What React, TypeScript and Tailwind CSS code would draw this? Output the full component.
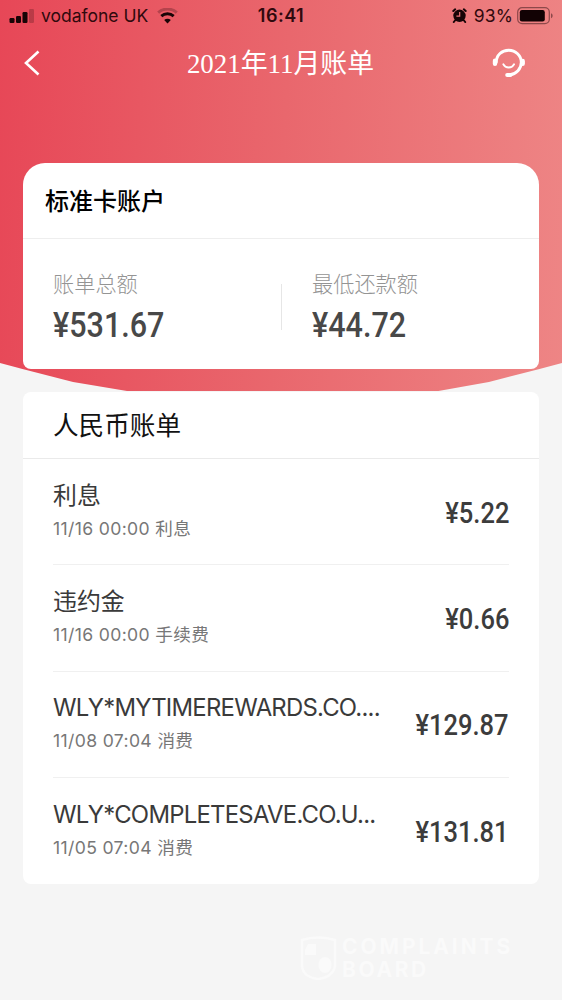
import type { ReactNode } from 'react'

type Entry = {
  title: string
  time: string
  kind: string
  amount: string
}

const ENTRIES: Entry[] = [
  { title: '利息', time: '11/16 00:00', kind: '利息', amount: '5.22' },
  { title: '违约金', time: '11/16 00:00', kind: '手续费', amount: '0.66' },
  { title: 'WLY*MYTIMEREWARDS.CO....', time: '11/08 07:04', kind: '消费', amount: '129.87' },
  { title: 'WLY*COMPLETESAVE.CO.U...', time: '11/05 07:04', kind: '消费', amount: '131.81' },
]

function StatusBar() {
  return (
    <div className="grid h-[31px] grid-cols-[1fr_auto_1fr] items-center pl-[9px] pr-[9px] text-[#30090d]">
      <div className="flex items-center">
        <svg width="26" height="14" viewBox="0 0 26 14">
          <rect x="0.5" y="9" width="5" height="5" rx="1.2" fill="#180406" />
          <rect x="7" y="7" width="5" height="7" rx="1.2" fill="#180406" />
          <rect x="13.5" y="3" width="5" height="11" rx="1.2" fill="#180406" />
          <rect x="20" y="0" width="5" height="14" rx="1.2" fill="#180406" opacity="0.22" />
        </svg>
        <span className="ml-[6px] w-[107px] whitespace-nowrap text-[17.5px] leading-5">vodafone UK</span>
        <svg className="ml-[9px]" width="21" height="16" viewBox="0 0 21 16" fill="none" stroke="#180406">
          <path d="M1.2 4.6C6.5-.1 14.5-.1 19.8 4.6" strokeWidth="3" opacity="0.25" />
          <path d="M4.3 8.1C7.8 5 13.2 5 16.7 8.1" strokeWidth="2.9" />
          <path d="M10.5 15.5L7.2 11.9C9 10.3 12 10.3 13.8 11.9Z" fill="#180406" stroke="none" />
        </svg>
      </div>
      <span className="text-[18px] font-semibold leading-5 tracking-[0.5px]">16:41</span>
      <div className="flex items-center justify-end">
        <svg width="15" height="15" viewBox="0 0 15 15">
          <circle cx="7.5" cy="7.8" r="6.2" fill="#180406" />
          <path d="M1.3 3L3.2 1.3M13.7 3L11.8 1.3M3 12.5L1.8 14M12 12.5L13.2 14" stroke="#180406" strokeWidth="2" strokeLinecap="round" />
          <path d="M7.7 4V8.2H4.4" stroke="#eb7479" strokeWidth="1.2" fill="none" />
        </svg>
        <span className="ml-[7px] text-[17.5px] leading-5 tracking-[0.1px]">93%</span>
        <svg className="ml-[4px]" width="36" height="18" viewBox="0 0 36 18">
          <rect x="0.7" y="0.7" width="31.6" height="16" rx="4.4" fill="none" stroke="#180406" strokeWidth="1.2" opacity="0.45" />
          <rect x="2.8" y="3" width="25" height="11.4" rx="2.2" fill="#120204" />
          <path d="M34 6.2C36.2 7.2 36.2 10.2 34 11.2Z" fill="#180406" opacity="0.45" />
        </svg>
      </div>
    </div>
  )
}

function NavBar() {
  return (
    <div className="flex h-[64px] items-center justify-between pl-[23px] pr-[36px] text-white">
      <svg width="18" height="28" viewBox="0 0 18 28" fill="none" stroke="currentColor" strokeWidth="2.6">
        <path d="M15.5 2.5L3 14L15.5 25.5" />
      </svg>
      <h1 className="ml-[28px] mt-[2px] whitespace-nowrap font-['Liberation_Serif','Noto_Sans_CJK_SC',serif] text-[26.9px] font-normal leading-8">
        2021年11月账单
      </h1>
      <svg width="34" height="30" viewBox="0 0 34 30" fill="none" stroke="currentColor" strokeLinecap="round">
        <path d="M4.3 14.2C4.3 7 10 2.2 16.7 2.2C23.6 2.2 29.3 7.5 29.3 14.3C29.3 20.8 24.5 26 17.2 27" strokeWidth="2.9" />
        <path d="M3 12.8V15.8M30.7 13V15.8" strokeWidth="4.4" />
        <path d="M15.2 27H18.4" strokeWidth="4" />
        <path d="M11.4 16.4C13.5 20.6 19.9 20.6 22 16.4" strokeWidth="2" />
      </svg>
    </div>
  )
}

function Total({ label, children }: { label: string; children: ReactNode }) {
  return (
    <div className="w-[228px] shrink-0">
      <p className="text-[21.2px] font-light leading-[31px] text-[#949494]">{label}</p>
      <p className="mt-[5px] w-max origin-left scale-x-[0.86] font-[Roboto] text-[35.5px] font-medium leading-10 text-[#484848]">
        ¥{children}
      </p>
    </div>
  )
}

function EntryRow({ entry }: { entry: Entry }) {
  return (
    <li className="flex h-[106.4px] items-center justify-between border-b border-[#f0f0f0] last:border-b-0">
      <div className="pt-px">
        <p className={`whitespace-nowrap text-[23.9px] leading-8 text-[#3a3a3a] ${entry.title.startsWith('WLY') ? 'tracking-[-0.75px]' : ''}`}>
          {entry.title}
        </p>
        <p className="mt-px whitespace-nowrap text-[17.6px] leading-8 tracking-[0.35px] text-[#777]">
          {entry.time} {entry.kind}
        </p>
      </div>
      <span className="mt-[2px] origin-right scale-x-[0.85] font-[Roboto] text-[30px] font-medium leading-10 text-[#3c3c3c]">
        ¥{entry.amount}
      </span>
    </li>
  )
}

function Watermark() {
  return (
    <div className="flex items-center gap-[5px] text-[#fafafa]">
      <svg width="37" height="44" viewBox="0 0 37 44">
        <path d="M2 4Q18-1 35 4V30Q33 41 18 43Q3 41 2 30Z" fill="none" stroke="currentColor" strokeWidth="2.5" />
        <path d="M8 8H16V19H5V14Z" fill="currentColor" />
        <ellipse cx="25" cy="29" rx="6.5" ry="8" fill="currentColor" />
      </svg>
      <div className="text-[21px] font-bold leading-[23px]">
        <p className="whitespace-nowrap tracking-[2.9px]">COMPLAINTS</p>
        <p className="tracking-[2.6px]">BOARD</p>
      </div>
    </div>
  )
}

export default function App() {
  return (
    <div className="relative isolate h-[1000px] w-[562px] overflow-hidden bg-[#f5f5f5] font-[Inter,'Noto_Sans_CJK_SC',sans-serif]">
      {/* Red backdrop, tapering towards both bottom corners */}
      <div className="absolute inset-x-0 top-0 -z-10 h-[391px] bg-linear-[93deg] from-[#e74757] via-[#e9676d] to-[#ee8585] [clip-path:polygon(0_0,100%_0,100%_363px,96%_369px,87%_382px,78%_391px,22.6%_391px,13%_382px,4%_369px,0_363px)]" />

      <StatusBar />
      <NavBar />

      <main className="px-[23px] pt-[68px]">
        <section className="h-[206px] rounded-t-[22px] rounded-b-[8px] bg-white">
          <h2 className="h-[76px] border-b border-[#eee] pl-[22px] text-[24px] font-medium leading-[77px] text-black">
            标准卡账户
          </h2>
          <div className="flex pl-[30px] pt-[30px]">
            <Total label="账单总额">531.67</Total>
            <div className="mr-[30px] mt-[15px] h-[46px] w-px shrink-0 bg-[#e6e6e6]" />
            <Total label="最低还款额">44.72</Total>
          </div>
        </section>

        <section className="mt-[23px] h-[492px] rounded-[8px] bg-white">
          <h2 className="h-[67px] border-b border-[#eaeaea] pl-[30px] text-[25.6px] leading-[68px] text-[#111]">
            人民币账单
          </h2>
          <ul className="px-[30px]">
            {ENTRIES.map(entry => (
              <EntryRow key={entry.title} entry={entry} />
            ))}
          </ul>
        </section>
      </main>

      <div className="ml-[300px] mt-[51px]">
        <Watermark />
      </div>
    </div>
  )
}
